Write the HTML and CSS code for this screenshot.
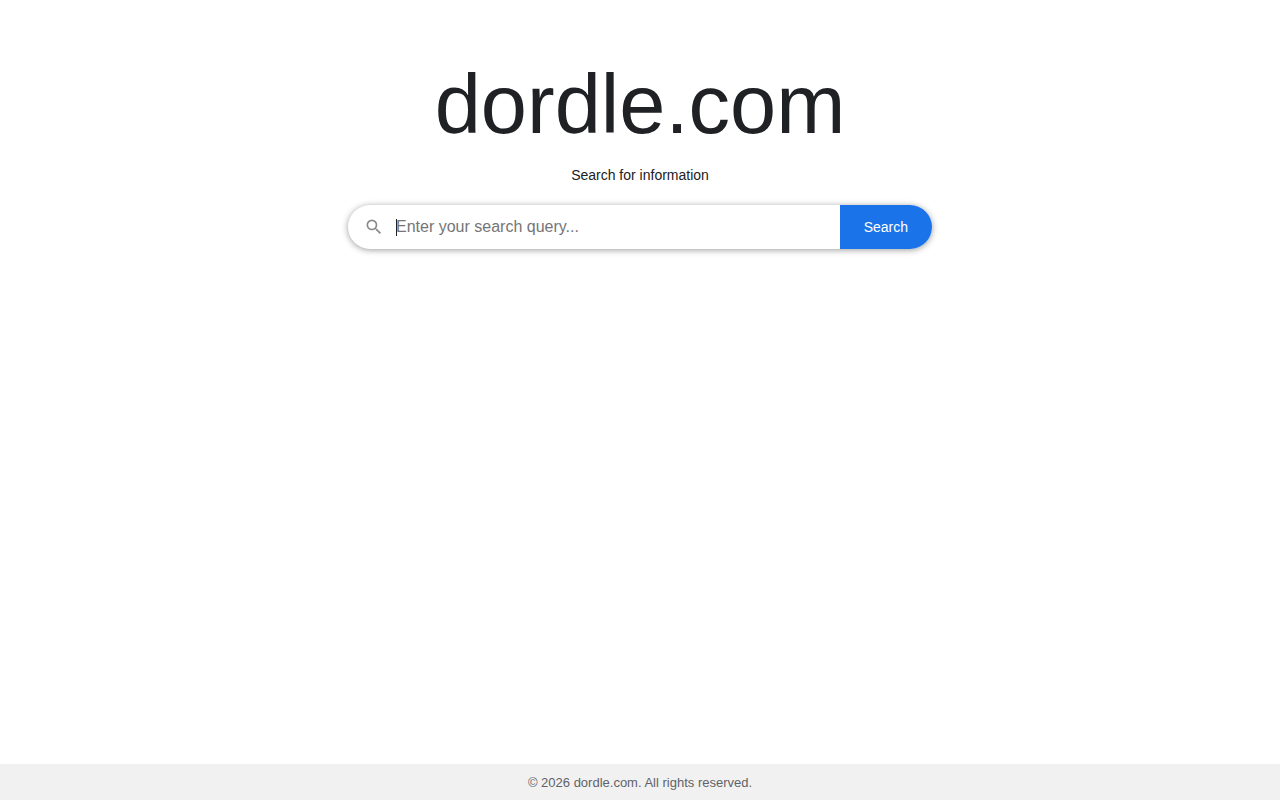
FILE: index.html
```
<!DOCTYPE html>
<html lang="en">
<head>
<meta charset="utf-8">
<meta name="viewport" content="width=device-width, initial-scale=1">
<title>dordle.com</title>
<link rel="stylesheet" href="styles.css">
</head>
<body>
<main class="main">
  <h1 class="title">dordle.com</h1>
  <p class="subtitle">Search for information</p>
  <form class="search" role="search">
    <svg class="search-icon" viewBox="0 0 24 24" aria-hidden="true"><path d="M15.5 14h-.79l-.28-.27A6.471 6.471 0 0 0 16 9.5 6.5 6.5 0 1 0 9.5 16c1.61 0 3.09-.59 4.23-1.57l.27.28v.79l5 4.99L20.49 19l-4.99-5zm-6 0C7.01 14 5 11.99 5 9.5S7.01 5 9.5 5 14 7.01 14 9.5 11.99 14 9.5 14z"/></svg>
    <div class="search-field">
      <input class="search-input" type="text" aria-label="Search query" placeholder="Enter your search query..." autofocus>
    </div>
    <button class="search-button" type="submit">Search</button>
  </form>
</main>
<footer class="footer">© 2026 dordle.com. All rights reserved.</footer>
</body>
</html>
```
FILE: styles.css
```
* {
  box-sizing: border-box;
}

body {
  margin: 0;
  min-height: 100vh;
  display: flex;
  flex-direction: column;
  background: #fff;
  color: #202124;
  font-family: "Liberation Sans", Arial, sans-serif;
  font-size: 14px;
}

.main {
  flex: 1;
  display: flex;
  flex-direction: column;
  align-items: center;
  padding: 57px 20px 20px;
}

.title {
  margin: 0 0 12px;
  font-size: 83px;
  font-weight: 400;
  line-height: 96px;
}

.subtitle {
  margin: 0 0 20px;
  line-height: 20px;
}

.search {
  display: flex;
  align-items: center;
  width: 100%;
  max-width: 584px;
  height: 44px;
  padding-left: 16px;
  overflow: hidden;
  border-radius: 24px;
  background: #fff;
  box-shadow: 0 1px 6px rgba(32, 33, 36, 0.45);
}

.search-icon {
  flex: none;
  width: 20px;
  height: 20px;
  margin-right: 12px;
  fill: #8a8a8a;
}

.search-field {
  position: relative;
  flex: 1;
  min-width: 0;
  height: 100%;
}

/* Text cursor of the empty field */
.search-field:has(.search-input:placeholder-shown)::before {
  content: "";
  position: absolute;
  top: 14px;
  left: 0;
  width: 1px;
  height: 17px;
  background: #202124;
}

.search-input {
  width: 100%;
  height: 100%;
  padding: 0;
  border: 0;
  outline: 0;
  background: transparent;
  color: #202124;
  caret-color: transparent;
  font: inherit;
  font-size: 16px;
}

.search-input:not(:placeholder-shown) {
  caret-color: auto;
}

.search-input::placeholder {
  color: #757575;
}

.search-button {
  height: 100%;
  padding: 0 24px;
  border: 0;
  background: #1a73e8;
  color: #fff;
  font: inherit;
  cursor: pointer;
}

.footer {
  padding: 11px 10px 9px;
  background: #f1f1f1;
  color: #5f6368;
  font-size: 13px;
  line-height: 16px;
  text-align: center;
}
```
